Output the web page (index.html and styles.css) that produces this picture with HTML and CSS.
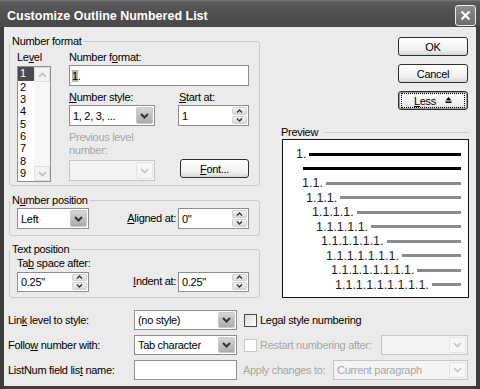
FILE: index.html
```html
<!DOCTYPE html>
<html>
<head>
  <meta charset="UTF-8">
  <title>Customize Outline Numbered List</title>
  <link rel="stylesheet" href="styles.css">
</head>
<body>
  <div class="window">
    <div class="titlebar">
      <span class="title">Customize Outline Numbered List</span>
      <span class="close">
        <svg width="11" height="11" viewBox="0 0 11 11"><path d="M1.5 1.5l8 8M9.5 1.5l-8 8" stroke="#fff" stroke-width="2.2" fill="none"/></svg>
      </span>
    </div>

    <div class="client">
      <div class="top">
        <div class="left">

          <div class="group g-format">
            <span class="legend">Number format</span>
            <div class="level-col">
              <div class="lbl">Le<u>v</u>el</div>
              <div class="listbox">
                <div class="items">
                  <div class="item sel">1</div>
                  <div class="item">2</div>
                  <div class="item">3</div>
                  <div class="item">4</div>
                  <div class="item">5</div>
                  <div class="item">6</div>
                  <div class="item">7</div>
                  <div class="item">8</div>
                  <div class="item">9</div>
                </div>
                <div class="vscroll">
                  <span class="sbtn"><svg width="9" height="6" viewBox="0 0 9 6"><path d="M1 5l3.5-3.5L8 5" fill="none" stroke="#bdbdbd" stroke-width="1.6"/></svg></span>
                  <span class="sbtn"><svg width="9" height="6" viewBox="0 0 9 6"><path d="M1 1l3.5 3.5L8 1" fill="none" stroke="#bdbdbd" stroke-width="1.6"/></svg></span>
                </div>
              </div>
            </div>

            <div class="format-col">
              <div class="lbl">Number f<u>o</u>rmat:</div>
              <div class="textbox wide"><span class="hl">1</span>.</div>

              <div class="pair">
                <div class="f86">
                  <div class="lbl"><u>N</u>umber style:</div>
                  <div class="combo"><span class="val">1, 2, 3, ...</span><span class="drop"><svg width="9" height="6" viewBox="0 0 9 6"><path d="M1 1l3.5 3.5L8 1" fill="none" stroke="#333" stroke-width="2"/></svg></span></div>
                </div>
                <div class="f71">
                  <div class="lbl"><u>S</u>tart at:</div>
                  <div class="spin"><span class="val">1</span><span class="spinbtns"><span class="sb"><svg width="7" height="4" viewBox="0 0 7 4"><path d="M1 3.5L3.5 1L6 3.5" fill="none" stroke="#333" stroke-width="1.4"/></svg></span><span class="sb"><svg width="7" height="4" viewBox="0 0 7 4"><path d="M1 .5L3.5 3L6 .5" fill="none" stroke="#333" stroke-width="1.4"/></svg></span></span></div>
                </div>
              </div>

              <div class="pair bottom-pair">
                <div class="f86">
                  <div class="lbl dis two">Previous level<br>number:</div>
                  <div class="combo disabled"><span class="val"></span><span class="drop"><svg width="9" height="6" viewBox="0 0 9 6"><path d="M1 1l3.5 3.5L8 1" fill="none" stroke="#c4c4c4" stroke-width="1.6"/></svg></span></div>
                </div>
                <button class="btn font"><span><u>F</u>ont...</span></button>
              </div>
            </div>
          </div>

          <div class="group g-pos">
            <span class="legend">N<u>u</u>mber position</span>
            <div class="combo"><span class="val">Left</span><span class="drop"><svg width="9" height="6" viewBox="0 0 9 6"><path d="M1 1l3.5 3.5L8 1" fill="none" stroke="#333" stroke-width="2"/></svg></span></div>
            <div class="lbl ralign"><u>A</u>ligned at:</div>
            <div class="spin"><span class="val">0"</span><span class="spinbtns"><span class="sb"><svg width="7" height="4" viewBox="0 0 7 4"><path d="M1 3.5L3.5 1L6 3.5" fill="none" stroke="#333" stroke-width="1.4"/></svg></span><span class="sb"><svg width="7" height="4" viewBox="0 0 7 4"><path d="M1 .5L3.5 3L6 .5" fill="none" stroke="#333" stroke-width="1.4"/></svg></span></span></div>
          </div>

          <div class="group g-text">
            <span class="legend">Text position</span>
            <div class="lbl tab-lbl">Ta<u>b</u> space after:</div>
            <div class="spin"><span class="val">0.25"</span><span class="spinbtns"><span class="sb"><svg width="7" height="4" viewBox="0 0 7 4"><path d="M1 3.5L3.5 1L6 3.5" fill="none" stroke="#333" stroke-width="1.4"/></svg></span><span class="sb"><svg width="7" height="4" viewBox="0 0 7 4"><path d="M1 .5L3.5 3L6 .5" fill="none" stroke="#333" stroke-width="1.4"/></svg></span></span></div>
            <div class="lbl ralign"><u>I</u>ndent at:</div>
            <div class="spin"><span class="val">0.25"</span><span class="spinbtns"><span class="sb"><svg width="7" height="4" viewBox="0 0 7 4"><path d="M1 3.5L3.5 1L6 3.5" fill="none" stroke="#333" stroke-width="1.4"/></svg></span><span class="sb"><svg width="7" height="4" viewBox="0 0 7 4"><path d="M1 .5L3.5 3L6 .5" fill="none" stroke="#333" stroke-width="1.4"/></svg></span></span></div>
          </div>
        </div>

        <div class="side">
          <button class="btn">OK</button>
          <button class="btn">Cancel</button>
          <button class="btn less"><span class="focus"><span><u>L</u>ess</span><svg width="7" height="7" viewBox="0 0 7 7"><path d="M3.5 0L6.5 3.5H.5z" fill="#000"/><rect x=".5" y="4.5" width="6" height="1.5" fill="#000"/></svg></span></button>

          <div class="preview-head"><span>Preview</span><span class="rule"></span></div>
          <div class="preview">
            <div class="prow" style="padding-left:13px"><span class="num">1.</span><span class="bar black"></span></div>
            <div class="prow" style="padding-left:20px"><span class="bar black first"></span></div>
            <div class="prow" style="padding-left:19px"><span class="num">1.1.</span><span class="bar"></span></div>
            <div class="prow" style="padding-left:23px"><span class="num">1.1.1.</span><span class="bar"></span></div>
            <div class="prow" style="padding-left:29px"><span class="num">1.1.1.1.</span><span class="bar"></span></div>
            <div class="prow" style="padding-left:33px"><span class="num">1.1.1.1.1.</span><span class="bar"></span></div>
            <div class="prow" style="padding-left:38px"><span class="num">1.1.1.1.1.1.</span><span class="bar"></span></div>
            <div class="prow" style="padding-left:43px"><span class="num">1.1.1.1.1.1.1.</span><span class="bar"></span></div>
            <div class="prow" style="padding-left:48px"><span class="num">1.1.1.1.1.1.1.1.</span><span class="bar"></span></div>
            <div class="prow" style="padding-left:52px"><span class="num">1.1.1.1.1.1.1.1.1.</span><span class="bar"></span></div>
          </div>
        </div>
      </div>

      <div class="bottom">
        <div class="lbl">Lin<u>k</u> level to style:</div>
        <div class="combo"><span class="val">(no style)</span><span class="drop"><svg width="9" height="6" viewBox="0 0 9 6"><path d="M1 1l3.5 3.5L8 1" fill="none" stroke="#333" stroke-width="2"/></svg></span></div>
        <div class="extra">
          <span class="check"></span><span class="lbl">Legal style numbering</span>
        </div>

        <div class="lbl">Follo<u>w</u> number with:</div>
        <div class="combo"><span class="val">Tab character</span><span class="drop"><svg width="9" height="6" viewBox="0 0 9 6"><path d="M1 1l3.5 3.5L8 1" fill="none" stroke="#333" stroke-width="2"/></svg></span></div>
        <div class="extra">
          <span class="check disabled"></span><span class="lbl dis">Restart numbering after:</span>
          <div class="combo disabled restart"><span class="val"></span><span class="drop"><svg width="9" height="6" viewBox="0 0 9 6"><path d="M1 1l3.5 3.5L8 1" fill="none" stroke="#c4c4c4" stroke-width="1.6"/></svg></span></div>
        </div>

        <div class="lbl">ListNum field lis<u>t</u> name:</div>
        <div class="textbox"></div>
        <div class="extra">
          <span class="lbl dis apply">Apply changes to:</span>
          <div class="combo disabled applyto"><span class="val">Current paragraph</span><span class="drop"><svg width="9" height="6" viewBox="0 0 9 6"><path d="M1 1l3.5 3.5L8 1" fill="none" stroke="#c4c4c4" stroke-width="1.6"/></svg></span></div>
        </div>
      </div>
    </div>
  </div>
</body>
</html>
```

FILE: styles.css
```css
* { box-sizing: border-box; }
body { margin: 0; font-family: "Liberation Sans", Arial, sans-serif; font-size: 11px; letter-spacing: -0.3px; color: #000; }
u { text-decoration: underline; text-underline-offset: 1px; }

.window { width: 480px; height: 389px; background: #3c3c3c; display: flex; flex-direction: column; }
.titlebar { height: 27px; display: flex; justify-content: space-between; align-items: flex-start; padding: 0 4px 0 7px; background: linear-gradient(#7a7a7a 0, #5a5a5a 2px, #505050 50%, #484848 100%); }
.title { color: #fff; font-weight: bold; font-size: 12.5px; line-height: 15px; margin-top: 9px; letter-spacing: 0; }
.close { margin-top: 5px; width: 21px; height: 21px; border: 1px solid #ececec; border-radius: 3px; background: linear-gradient(#8c8c8c, #6c6c6c); display: flex; align-items: center; justify-content: center; }

.client { flex: 1; margin: 0 4px 3px; background: #ebebeb; padding: 0 8px 0 4px; display: flex; flex-direction: column; }
.top { display: flex; }
.left { width: 251px; margin-left: 1px; padding-top: 14px; display: flex; flex-direction: column; flex-shrink: 0; }

.group { position: relative; border: 1px solid #cbcbcb; border-radius: 3px; }
.legend { position: absolute; top: -7px; left: 0; padding: 0 2px; background: #ebebeb; line-height: 13px; white-space: nowrap; }
.lbl { line-height: 13px; white-space: nowrap; }
.lbl.dis { color: #a6a6a6; }
.lbl.ralign { text-align: right; padding-right: 2px; }

.g-format { height: 145px; display: flex; padding: 9px 0 0 7px; }
.level-col { width: 34px; }
.listbox { margin-top: 2px; height: 116px; border: 1px solid #8f8f8f; background: #fff; display: flex; }
.items { flex: 1; }
.item { height: 12.4px; line-height: 12.4px; padding-left: 2px; }
.item.sel { background: #4c4c4c; color: #fff; height: 13.5px; line-height: 13.5px; }
.vscroll { width: 16px; background: #f7f7f7; display: flex; flex-direction: column; justify-content: space-between; }
.sbtn { height: 15px; border: 1px solid #dedede; border-radius: 2px; background: #f3f3f3; display: flex; align-items: center; justify-content: center; }

.format-col { margin-left: 18px; width: 180px; }
.pair { display: flex; justify-content: space-between; margin-top: 5px; }
.bottom-pair { align-items: flex-end; }
.f86 { width: 86px; }
.f71 { width: 71px; }
.f71 .lbl { padding-left: 1px; }
.two { margin-bottom: 3px; }

.textbox { height: 21px; border: 1px solid #8f8f8f; background: #fff; padding-left: 2px; display: flex; align-items: center; }
.format-col .textbox { margin-top: 1px; }
.hl { background: #b4b4b4; }

.combo { height: 21px; border: 1px solid #8f8f8f; background: #fff; display: flex; align-items: stretch; padding: 1px; }
.f86 .combo { margin-top: 1px; }
.combo .val { flex: 1; padding-left: 2px; display: flex; align-items: center; white-space: nowrap; overflow: hidden; }
.drop { width: 17px; border-radius: 2px; border: 1px solid #c9c9c9; background: linear-gradient(#d6d6d6, #ababab); display: flex; align-items: center; justify-content: center; }
.combo.disabled { border-color: #c6c6c6; background: #f4f4f4; }
.combo.disabled .val { color: #a6a6a6; }
.combo.disabled .drop { border-color: #e4e4e4; background: #f6f6f6; }

.spin { height: 21px; border: 1px solid #8f8f8f; background: #fff; display: flex; padding: 1px; }
.f71 .spin { margin-top: 1px; }
.spin .val { flex: 1; padding-left: 2px; display: flex; align-items: center; }
.spinbtns { width: 15px; display: flex; flex-direction: column; gap: 1px; }
.sb { flex: 1; border: 1px solid #cfcfcf; border-radius: 2px; background: linear-gradient(#f4f4f4, #d9d9d9); display: flex; align-items: center; justify-content: center; }

.btn { width: 70px; height: 19px; padding: 0; font: inherit; letter-spacing: inherit; color: #000; border: 1px solid #2e2e2e; border-radius: 3px; background: linear-gradient(#ffffff, #f0f0f0 70%, #d6d6d6); display: flex; align-items: center; justify-content: center; }
.btn.font { width: 69px; margin-bottom: 3px; }

.g-pos { height: 36px; margin-top: 14px; display: grid; grid-template-columns: 72px 1fr 71px; align-items: center; align-content: start; padding: 7px 10px 0 7px; }
.g-text { height: 49px; margin-top: 13px; display: grid; grid-template-columns: 72px 1fr 71px; grid-template-rows: 13px 21px; row-gap: 1px; align-items: center; padding: 7px 10px 0 7px; }
.tab-lbl { grid-column: 1 / 4; }
.g-text .spin { height: 20px; }

.side { flex: 1; display: flex; flex-direction: column; align-items: flex-end; padding-top: 10px; }
.side .btn { margin-bottom: 8px; }
.less { box-shadow: inset 0 0 0 1px #9a9a9a; }
.less .focus { width: 64px; height: 15px; border: 1px dotted #000; display: flex; align-items: center; justify-content: center; gap: 9px; }
.preview-head { align-self: stretch; margin: 8px -1px 0 21px; display: flex; align-items: center; line-height: 13px; }
.preview-head .rule { flex: 1; height: 1px; background: #cfcfcf; margin-left: 6px; }
.preview { align-self: stretch; margin: 0 -1px 0 22px; height: 159px; border: 1px solid #111; background: #fff; padding: 7px 7px 0 0; }
.prow { height: 14.5px; display: flex; align-items: center; }
.num { font-size: 12.5px; letter-spacing: 0; color: #1e1e1e; white-space: nowrap; }
.bar { flex: 1; height: 3px; background: #8a8a8a; margin-left: 3px; }
.bar.black { background: #000; }
.bar.first { margin-left: 0; }

.bottom { margin-top: 12px; display: grid; grid-template-columns: 126px 103px 1fr; row-gap: 5px; align-items: center; }
.bottom .combo, .bottom .textbox { height: 20px; }
.extra { display: flex; align-items: center; }
.check { width: 13px; height: 13px; margin: 0 3px 0 7px; border: 1px solid #474747; background: linear-gradient(135deg, #d8d8d8, #fff); }
.check.disabled { border-color: #cacaca; background: #fff; }
.restart { width: 87px; margin-left: auto; }
.apply { margin-left: 6px; }
.applyto { width: 135px; margin-left: auto; }
```
